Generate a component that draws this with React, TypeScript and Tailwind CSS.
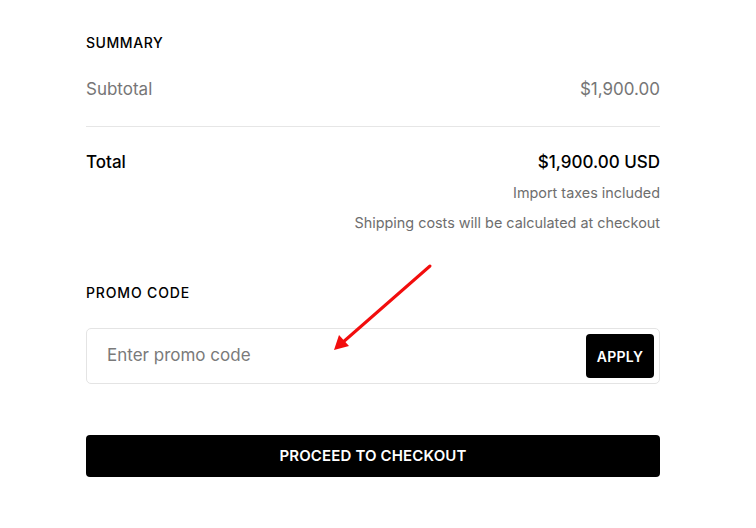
import React from "react";

function RedArrow() {
    return (
        <svg className="absolute left-0 top-0 pointer-events-none" width="756" height="528" viewBox="0 0 756 528">
            <line x1="430" y1="266" x2="342" y2="343" stroke="#f20d0d" strokeWidth="3" strokeLinecap="round" />
            <polygon points="334,350 339,335 349,346" fill="#f20d0d" />
        </svg>
    );
}

export default function App() {
    return (
        <div className="relative w-[756px] h-[528px] bg-white" style={{ fontFamily: "Inter, 'Noto Sans', sans-serif" }}>
            <div className="ml-[86px] w-[574px] pt-[33px]">
                <h2 className="text-[14px] leading-5 font-medium tracking-[0.04em] text-black">SUMMARY</h2>

                <div className="mt-[22px] flex justify-between items-center pb-[23px] border-b border-[#e6e6e6] text-[17px] leading-7 text-[#767676]">
                    <span>Subtotal</span>
                    <span>$1,900.00</span>
                </div>

                <div className="mt-[22px] flex justify-between items-center text-[17px] leading-[26px] font-medium text-black">
                    <span>Total</span>
                    <span>$1,900.00 USD</span>
                </div>
                <div className="mt-[8px] flex flex-col items-end gap-[10px] text-[14.4px] leading-5 text-[#6e6e6e]">
                    <span>Import taxes included</span>
                    <span>Shipping costs will be calculated at checkout</span>
                </div>

                <h2 className="mt-[50px] text-[14px] leading-5 font-medium tracking-[0.06em] text-black">PROMO CODE</h2>

                <div className="mt-[25px] h-[56px] flex items-center justify-between border border-[#e4e4e4] rounded-[5px] pl-[20px] pr-[5px]">
                    <input
                        className="flex-1 outline-none text-[17px] text-black placeholder:text-[#7a7a7a] bg-transparent"
                        placeholder="Enter promo code"
                    />
                    <button className="w-[68px] h-[44px] bg-black text-white rounded-[4px] text-[14px] font-semibold tracking-[0.02em]">
                        APPLY
                    </button>
                </div>

                <button className="mt-[51px] w-full h-[42px] bg-black text-white rounded-[4px] text-[15px] font-semibold tracking-[0.01em]">
                    PROCEED TO CHECKOUT
                </button>
            </div>
            <RedArrow />
        </div>
    );
}
